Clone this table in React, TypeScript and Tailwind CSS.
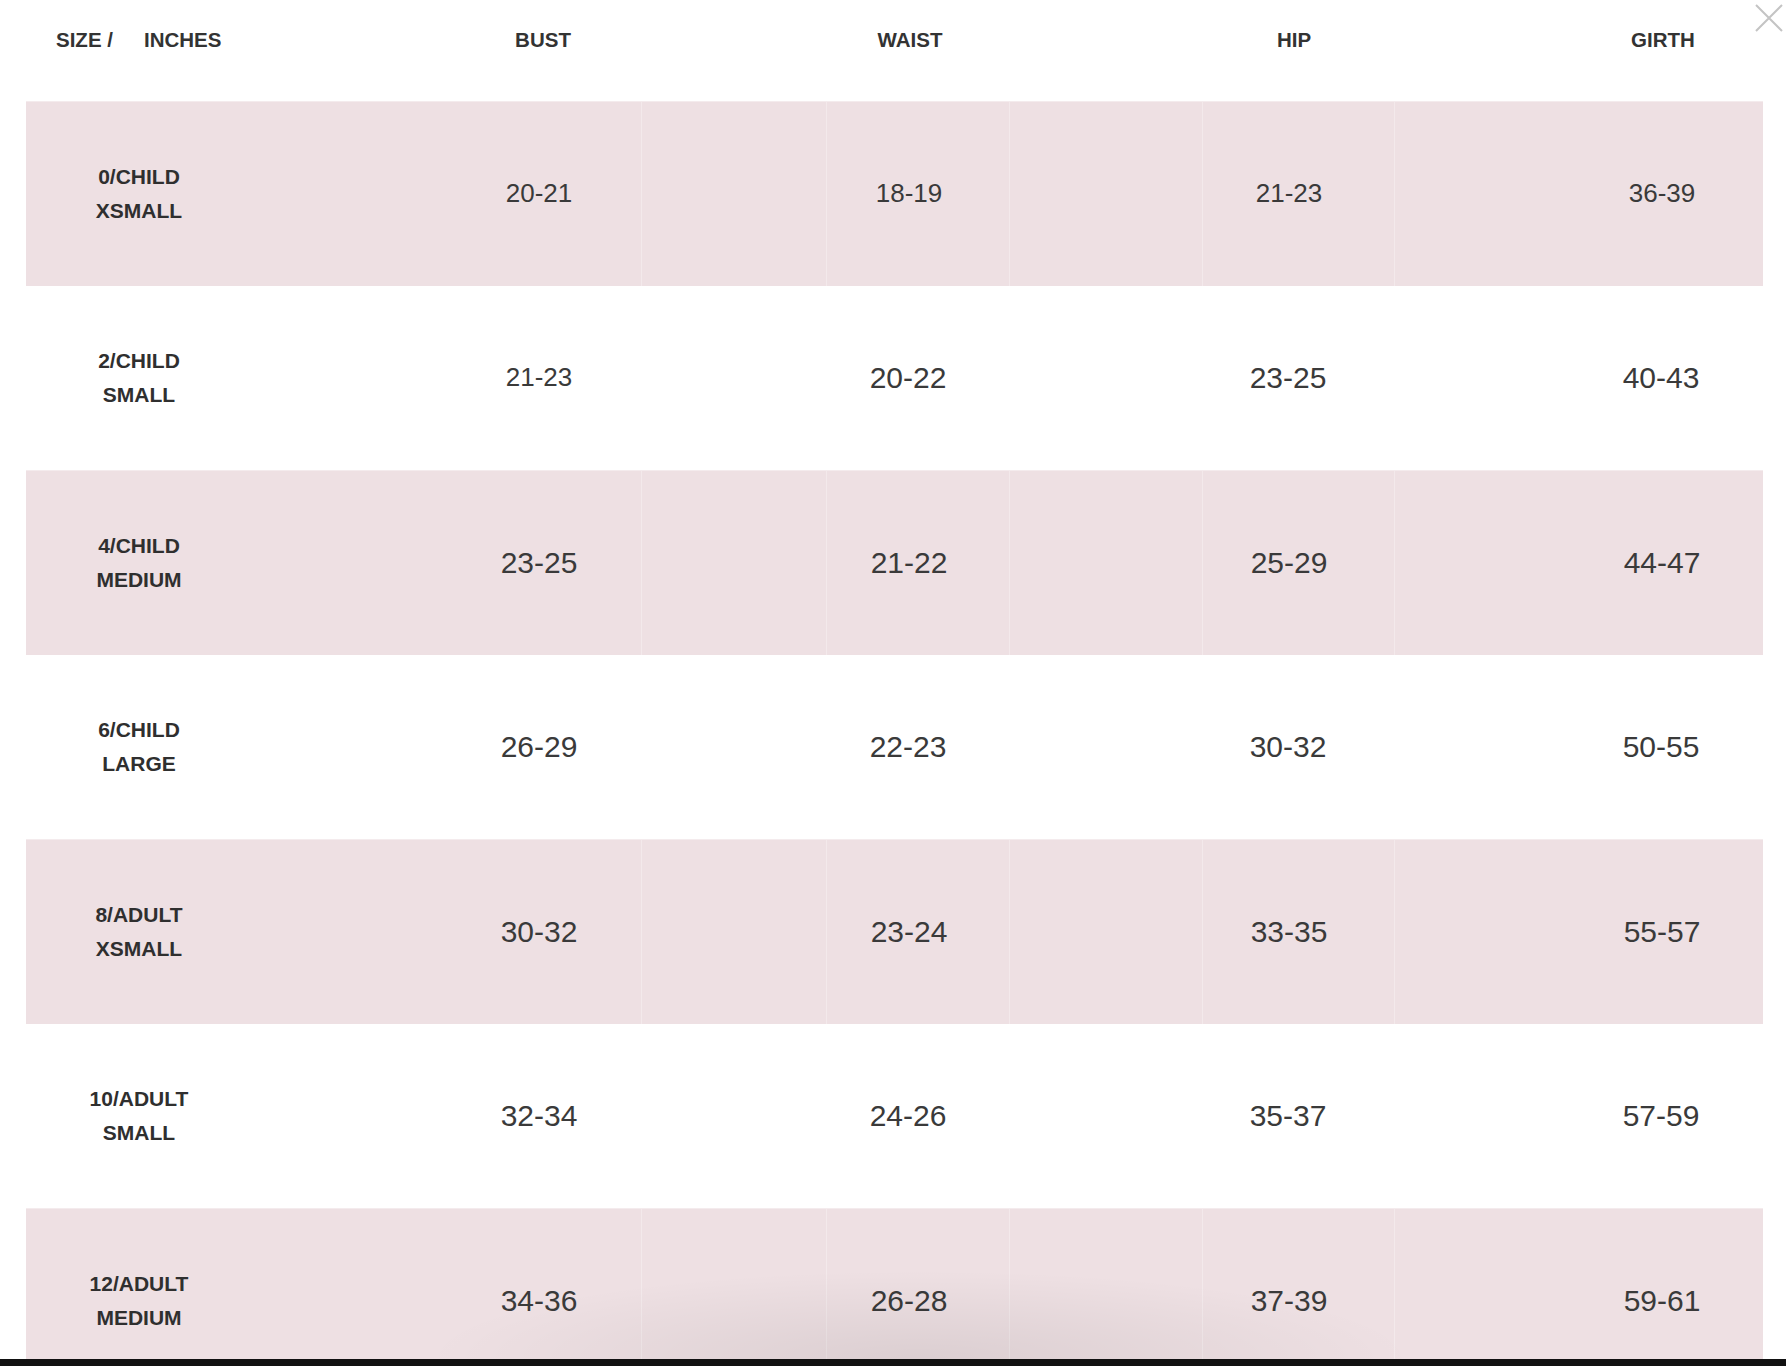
const rows = [
  { size: ["0/CHILD", "XSMALL"], bust: "20-21", waist: "18-19", hip: "21-23", girth: "36-39", small: true },
  { size: ["2/CHILD", "SMALL"], bust: "21-23", waist: "20-22", hip: "23-25", girth: "40-43", smallBust: true },
  { size: ["4/CHILD", "MEDIUM"], bust: "23-25", waist: "21-22", hip: "25-29", girth: "44-47" },
  { size: ["6/CHILD", "LARGE"], bust: "26-29", waist: "22-23", hip: "30-32", girth: "50-55" },
  { size: ["8/ADULT", "XSMALL"], bust: "30-32", waist: "23-24", hip: "33-35", girth: "55-57" },
  { size: ["10/ADULT", "SMALL"], bust: "32-34", waist: "24-26", hip: "35-37", girth: "57-59" },
  { size: ["12/ADULT", "MEDIUM"], bust: "34-36", waist: "26-28", hip: "37-39", girth: "59-61" },
];

const grid = "grid grid-cols-[615px_185px_183px_193px_192px_369px]";

function Value({ text, small }: { text: string; small?: boolean }) {
  return (
    <div className={`w-[120px] text-center text-[#3a3a3a] ${small ? "text-[26px]" : "text-[30px]"}`}>
      {text}
    </div>
  );
}

export default function App() {
  return (
    <div
      className="relative h-screen w-full overflow-hidden bg-white"
      style={{ fontFamily: '"Liberation Sans", Arial, sans-serif' }}
    >
      {/* close button */}
      <svg className="absolute top-[4px] right-[3px] h-[28px] w-[28px]" viewBox="0 0 28 28">
        <path d="M1 1 L27 27 M27 1 L1 27" stroke="#c4c4c4" strokeWidth="2" fill="none" />
      </svg>

      <div className="ml-[26px] w-[1737px]">
        {/* header */}
        <div className={`${grid} mb-[21px] h-[80px] items-center text-[20.5px] font-bold text-[#333]`}>
          <div className="flex items-center justify-between">
            <div className="flex gap-[31px] pl-[30px]">
              <span>SIZE /</span>
              <span>INCHES</span>
            </div>
            <div className="mr-[38px] w-[120px] text-center">BUST</div>
          </div>
          <div />
          <div className="ml-[24px] w-[120px] text-center">WAIST</div>
          <div />
          <div className="ml-[32px] w-[120px] text-center">HIP</div>
          <div className="ml-[209px] w-[120px] text-center">GIRTH</div>
        </div>

        {/* rows */}
        {rows.map((r, i) => {
          const pink = i % 2 === 0;
          const line = pink ? "border-l border-[#f3e9eb]" : "";
          return (
            <div
              key={r.size[0]}
              className={`${grid} h-[184.5px] ${pink ? "bg-[#eee0e3] border-t border-[#f4ebed]" : "bg-white"}`}
            >
              <div className="flex items-center justify-between">
                <div className="w-[226px] text-center text-[21px] font-bold leading-[34px] text-[#2f2f2f]">
                  <div>{r.size[0]}</div>
                  <div>{r.size[1]}</div>
                </div>
                <div className="mr-[42px]">
                  <Value text={r.bust} small={r.small || r.smallBust} />
                </div>
              </div>
              <div className={line} />
              <div className={`flex items-center ${line}`}>
                <div className="ml-[22px]">
                  <Value text={r.waist} small={r.small} />
                </div>
              </div>
              <div className={line} />
              <div className={`flex items-center ${line}`}>
                <div className="ml-[26px]">
                  <Value text={r.hip} small={r.small} />
                </div>
              </div>
              <div className={`flex items-center ${line}`}>
                <div className="ml-[207px]">
                  <Value text={r.girth} small={r.small} />
                </div>
              </div>
            </div>
          );
        })}
      </div>

      {/* soft shadow near the bottom edge */}
      <div className="pointer-events-none absolute bottom-[7px] left-[420px] h-[90px] w-[1000px] bg-[radial-gradient(ellipse_at_bottom,rgba(0,0,0,0.08),transparent_70%)]" />
      <div className="absolute bottom-0 left-0 h-[7px] w-full bg-[#111]" />
    </div>
  );
}
